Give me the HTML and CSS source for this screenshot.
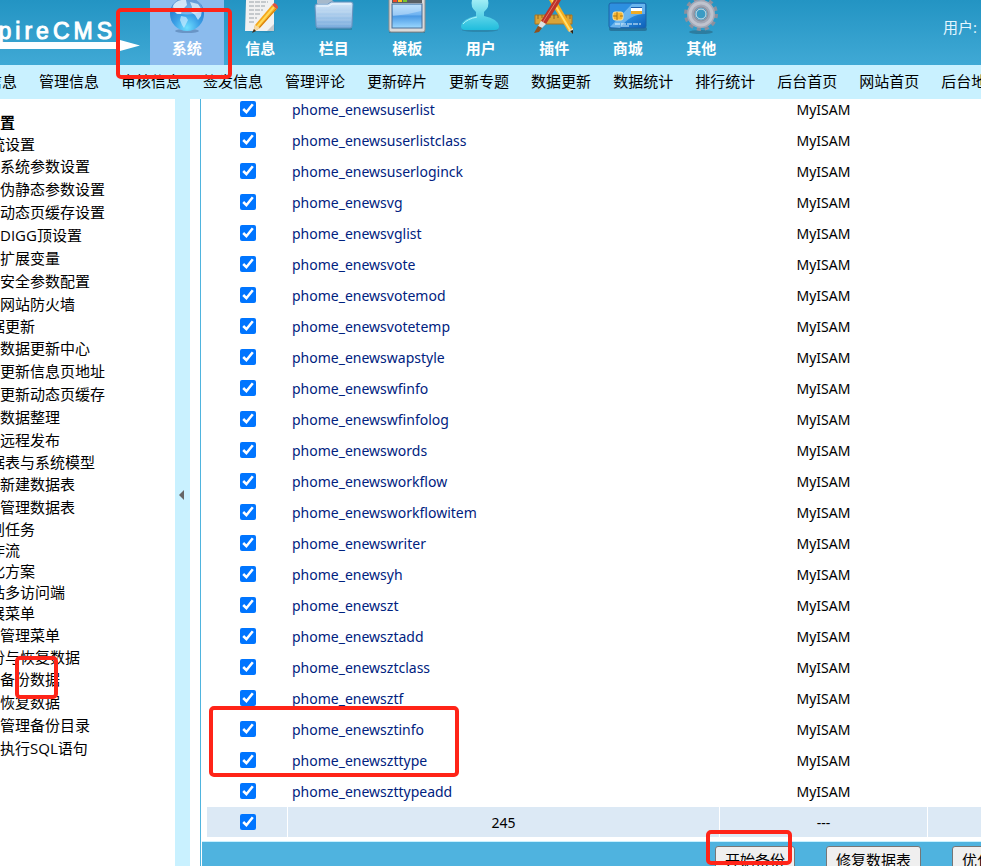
FILE: index.html
```
<!DOCTYPE html>
<html lang="zh-CN">
<head>
<meta charset="utf-8">
<title>EmpireCMS</title>
<link rel="stylesheet" href="styles.css">
</head>
<body>
<header class="top">
  <div class="logo">
    <span class="logo-text">EmpireCMS</span>
    <svg class="logo-arrow" width="140" height="12" viewBox="0 0 140 12" aria-hidden="true"><path d="M0 2H120V0L140 5.500L120 11V9H0Z" fill="#fff"/></svg>
  </div>
  <nav class="tabs">
    <a class="tab active" href="#">
      <svg width="40" height="36" viewBox="0 0 40 36" aria-hidden="true">
        <defs><radialGradient id="globe" cx=".5" cy=".9" r=".95"><stop offset="0" stop-color="#6fe0ff"/><stop offset=".4" stop-color="#3a9fe6"/><stop offset="1" stop-color="#1c62bd"/></radialGradient></defs>
        <ellipse cx="20" cy="31" rx="12" ry="2" fill="#48709f" opacity=".5"/>
        <circle cx="20" cy="14" r="17" fill="url(#globe)"/>
        <path d="M6 6Q9-1 19 0L20 5L17 8L15 10L14 14L10 14L7 11Z" fill="#e8f5ff" opacity=".8"/>
        <path d="M14 16L19 17L21 20L19 24L17 28L15 25L13 20Z" fill="#c7ebff" opacity=".7"/>
        <path d="M23 2L31 4L35 10L34 16L31 20L28 15L24 12L25 7Z" fill="#dff2ff" opacity=".75"/>
        <path d="M4 11Q20 18 36 11Q34-3 20-3Q6-3 4 11" fill="#fff" opacity=".3"/>
      </svg>
      <span>系统</span>
    </a>
    <a class="tab" href="#">
      <svg width="40" height="36" viewBox="0 0 40 36" aria-hidden="true">
        <path d="M5 0H32L35 31L28 33L5 31Z" fill="#25799e" opacity=".35"/>
        <path d="M6 0H34V31H5Z" fill="#f1f1f1"/><path d="M27 31L34 24V31Z" fill="#c4c8cc"/>
        <path d="M9 2H28M9 6H25M9 10H23M9 14H20M9 18H17M9 22H15" stroke="#b7bcc0" stroke-width="1.500" stroke-dasharray="5 1"/>
        <path d="M13 32L15 25L32 5L37 9L20 28Z" fill="#f5a81c"/>
        <path d="M17 27L34 7" stroke="#ffd95b" stroke-width="2"/><path d="M19 28L36 9" stroke="#cd7410" stroke-width="1"/>
        <path d="M32 5L34 3Q38 4 38 8L37 9Z" fill="#e0523e"/>
        <path d="M13 32L15 25L20 28Z" fill="#f4d9a5"/><path d="M12 33L14 29L16 31Z" fill="#412a17"/>
      </svg>
      <span>信息</span>
    </a>
    <a class="tab" href="#">
      <svg width="40" height="36" viewBox="0 0 40 36" aria-hidden="true">
        <defs><linearGradient id="folder" x2="0" y2="1"><stop stop-color="#d6e8f8"/><stop offset="1" stop-color="#78abdd"/></linearGradient></defs>
        <path d="M2 28H38V30H2Z" fill="#27637f" opacity=".4"/>
        <path d="M3 0H18L20 2H37V10H3Z" fill="#a6b9cb"/><path d="M4 3H36V10H4Z" fill="#d8dfe7"/>
        <path d="M1 6Q1 4 3 4H14L17 2H37Q39 2 39 4L38 26Q38 28 36 28H4Q2 28 2 26Z" fill="url(#folder)" stroke="#6792bd"/>
        <path d="M3 6H15L18 4H37" fill="none" stroke="#f0f8ff"/>
        <path d="M3 12H37M3 16H37M3 20H37M3 24H37" stroke="#fff" opacity=".18"/>
      </svg>
      <span>栏目</span>
    </a>
    <a class="tab" href="#">
      <svg width="40" height="36" viewBox="0 0 40 36" aria-hidden="true">
        <defs><linearGradient id="pane" x2="0" y2="1"><stop stop-color="#a4d5fc"/><stop offset=".45" stop-color="#6fb2f0"/><stop offset=".5" stop-color="#4a99e4"/><stop offset="1" stop-color="#9bd8ff"/></linearGradient></defs>
        <path d="M2 31H38V33H2Z" fill="#24566f" opacity=".4"/>
        <rect x="2" y="-4" width="36" height="36" rx="2" fill="#dadada" stroke="#8c8c8c"/>
        <rect x="5" y="-4" width="30" height="7" fill="#585f65"/>
        <rect x="6" y="-2" width="4" height="4" fill="#ef4a2b"/><rect x="11" y="-2" width="4" height="4" fill="#ffc423"/><rect x="16" y="-2" width="4" height="4" fill="#79c52c"/>
        <rect x="5" y="4" width="30" height="24" fill="url(#pane)" stroke="#4a6f96"/>
        <path d="M6 16Q20 15 34 11V5H6Z" fill="#fff" opacity=".3"/>
      </svg>
      <span>模板</span>
    </a>
    <a class="tab" href="#">
      <svg width="40" height="36" viewBox="0 0 40 36" aria-hidden="true">
        <defs><linearGradient id="person" x2="0" y2="1"><stop stop-color="#a0edf5"/><stop offset="1" stop-color="#20bddd"/></linearGradient></defs>
        <ellipse cx="19" cy="30" rx="18" ry="2" fill="#246783" opacity=".4"/>
        <path d="M11 0H27Q29 7 23 12V16Q37 19 38 26Q38 30 34 30H4Q0 30 0 26Q1 19 15 16V12Q9 7 11 0Z" fill="url(#person)"/>
        <path d="M2 24Q6 19 16 17" fill="none" stroke="#a9f2fa"/>
      </svg>
      <span>用户</span>
    </a>
    <a class="tab" href="#">
      <svg width="40" height="36" viewBox="0 0 40 36" aria-hidden="true">
        <path d="M1 15H38V24H1Z" fill="#d9a439" stroke="#a87422"/><path d="M4 15V19M8 15V18M12 15V19M16 15V18M20 15V19M24 15V18M28 15V19M32 15V18M36 15V19" stroke="#8f651c"/>
        <path d="M15 0H22L39 29L38 33L34 31Z" fill="#f4ad1e"/><path d="M18 0L36 30" stroke="#ffe071" stroke-width="2"/><path d="M34 31L39 28L39 33Z" fill="#f5deb5"/><path d="M36 31L39 30V34Z" fill="#29211b"/>
        <path d="M20 0H27L12 24L7 21Z" fill="#bd3328"/><path d="M23 0L9 22" stroke="#e07868" stroke-width="1"/>
        <path d="M7 21L12 24L8 28L4 26Z" fill="#dce0e2"/><path d="M4 26L8 28L5 32L0 33Z" fill="#91501d"/>
      </svg>
      <span>插件</span>
    </a>
    <a class="tab" href="#">
      <svg width="40" height="36" viewBox="0 0 40 36" aria-hidden="true">
        <defs><linearGradient id="card" x2="1" y2="1"><stop stop-color="#2f8fe0"/><stop offset=".5" stop-color="#2b8fe0"/><stop offset="1" stop-color="#0d5fb8"/></linearGradient></defs>
        <rect x="1" y="27" width="38" height="4" rx="2" fill="#183c5c" opacity=".4"/>
        <rect x="1" y="3" width="37" height="25" rx="2" fill="url(#card)" stroke="#1d64a6"/>
        <path d="M2 27L24 4H37V14Q22 14 12 28Z" fill="#b9e4ff" opacity=".45"/>
        <rect x="5" y="12" width="10" height="8" rx="2" fill="#f5b632" stroke="#ffe5a0"/><path d="M9 12V20M5 16H9M12 16H15" stroke="#a77214"/>
        <path d="M23 7H34V10H23Z" fill="#fff"/><path d="M23 7H34V8H23Z" fill="#1d5faf"/><path d="M23 10H34V14H23Z" fill="#efac25"/><path d="M23 10H34V11H23Z" fill="#fff"/>
        <path d="M7 24H33" stroke="#eaf8ff" stroke-width="1" stroke-dasharray="5 1"/><path d="M13 26H21" stroke="#d7f2ff"/>
      </svg>
      <span>商城</span>
    </a>
    <a class="tab" href="#">
      <svg width="40" height="36" viewBox="0 0 40 36" aria-hidden="true">
        <ellipse cx="20" cy="32" rx="12" ry="2" fill="#285b73" opacity=".5"/>
        <circle cx="20" cy="14" r="15" fill="none" stroke="#8b909e" stroke-width="4" stroke-dasharray="4 3.854"/>
        <circle cx="20" cy="14" r="10" fill="none" stroke="#a3a8b6" stroke-width="8"/>
        <circle cx="20" cy="14" r="11" fill="none" stroke="#bfc3ce" stroke-width="3"/>
        <circle cx="20" cy="14" r="7" fill="none" stroke="#858b99" stroke-width="1"/>
        <circle cx="20" cy="14" r="5" fill="#3b9bc4" stroke="#dcdee4"/>
      </svg>
      <span>其他</span>
    </a>
  </nav>
  <div class="user">用户:</div>
</header>

<nav class="subnav">
  <a href="#">增加信息</a><a href="#">管理信息</a><a href="#">审核信息</a><a href="#">签发信息</a><a href="#">管理评论</a><a href="#">更新碎片</a><a href="#">更新专题</a><a href="#">数据更新</a><a href="#">数据统计</a><a href="#">排行统计</a><a href="#">后台首页</a><a href="#">网站首页</a><a href="#">后台地图</a>
</nav>

<div class="body">
  <aside class="side">
    <h2>系统设置</h2>
    <ul class="tree">
      <li class="group">系统设置</li>
      <li>系统参数设置</li>
      <li>伪静态参数设置</li>
      <li>动态页缓存设置</li>
      <li>DIGG顶设置</li>
      <li>扩展变量</li>
      <li>安全参数配置</li>
      <li>网站防火墙</li>
      <li class="group">数据更新</li>
      <li>数据更新中心</li>
      <li>更新信息页地址</li>
      <li>更新动态页缓存</li>
      <li>数据整理</li>
      <li>远程发布</li>
      <li class="group">数据表与系统模型</li>
      <li>新建数据表</li>
      <li>管理数据表</li>
      <li class="group">计划任务</li>
      <li class="group">工作流</li>
      <li class="group">优化方案</li>
      <li class="group">网站多访问端</li>
      <li class="group">扩展菜单</li>
      <li>管理菜单</li>
      <li class="group">备份与恢复数据</li>
      <li>备份数据</li>
      <li>恢复数据</li>
      <li>管理备份目录</li>
      <li>执行SQL语句</li>
    </ul>
  </aside>
  <button class="divider" type="button" aria-label="收起菜单"><svg width="6" height="10" viewBox="0 0 6 10" aria-hidden="true"><path d="M5 0V10L0 5Z" fill="#666"/></svg></button>
  <main class="main">
    <table class="list">
      <colgroup><col class="c-check"><col class="c-name"><col class="c-type"><col></colgroup>
      <tbody id="rows"></tbody>
      <tfoot>
        <tr><td><input type="checkbox" checked aria-label="全选"></td><td>245</td><td>---</td><td></td></tr>
      </tfoot>
    </table>
    <div class="actions">
      <button type="button">开始备份</button>
      <button type="button">修复数据表</button>
      <button type="button">优化数据表</button>
    </div>
  </main>
</div>

<div class="mark mark-tab"></div>
<div class="mark mark-menu"></div>
<div class="mark mark-rows"></div>
<div class="mark mark-start"></div>
<script src="rows.js"></script>
</body>
</html>
```
FILE: styles.css
```
* { box-sizing: border-box; }
body {
  margin: 0;
  height: 100vh;
  display: flex;
  flex-direction: column;
  overflow: hidden;
  position: relative;
  background: #fff;
  color: #000;
  font: 15px/20px "Open Sans", "Noto Sans CJK SC", sans-serif;
}
a { color: inherit; text-decoration: none; white-space: nowrap; }

.top {
  flex: none;
  height: 65px;
  display: flex;
  overflow: hidden;
  background: linear-gradient(#2394c3, #40a9d5);
  color: #fff;
}
.logo { flex: none; width: 150px; padding-top: 18px; }
.logo-text {
  display: flex;
  justify-content: flex-end;
  width: 116px;
  height: 22px;
  font: 23px/26px "Liberation Sans", sans-serif;
  letter-spacing: 4px;
  -webkit-text-stroke: 1px #fff;
}
.logo-arrow { display: block; }
.tabs { flex: none; width: 588px; display: grid; grid-template-columns: repeat(8, 1fr); }
.tab { display: flex; flex-direction: column; align-items: center; font-weight: 700; }
.tab svg { display: block; margin-bottom: 2px; }
.tab.active { background: #8bbbed; }
.user { margin-left: auto; width: 38px; padding-top: 17px; color: #e4f6ff; white-space: nowrap; }

.subnav {
  flex: none;
  height: 34px;
  display: flex;
  align-items: center;
  gap: 22px;
  padding-bottom: 2px;
  overflow: hidden;
  background: #c9f1ff;
}
.subnav a { flex: none; }
.subnav a:first-child { margin-left: -43px; }

.body { flex: 1; min-height: 0; display: flex; }
.side { flex: none; width: 175px; overflow: hidden; padding-top: 12px; }
.side h2 { margin: 0 0 0 -45px; font-size: 15px; line-height: 22px; }
.tree { list-style: none; margin: 1px 0 0 -25px; padding: 0; white-space: nowrap; }
.tree li { padding-left: 25px; line-height: 23px; height: 23px; }
.tree .group { padding-left: 0; line-height: 21px; height: 21px; }
.divider {
  flex: none;
  width: 15px;
  margin: 0 10px 0 0;
  padding: 26px 0 0 4px;
  border: 0;
  background: #c9f1ff;
  text-align: left;
}
.main { flex: 1; min-width: 0; overflow: hidden; border-left: 1px solid #4fb4de; }
.list {
  width: calc(100% - 4px);
  margin: -6px 0 0 5px;
  table-layout: fixed;
  border-collapse: separate;
  border-spacing: 1px;
  font: 14px/20px "Noto Sans", sans-serif;
}
.c-check { width: 80px; }
.c-name { width: 431px; }
.c-type { width: 207px; }
.list td { height: 30px; padding: 2px 0 0; text-align: center; }
.list td:first-child { padding: 0 0 0 2px; }
.list tbody td:nth-child(2) { padding-left: 4px; text-align: left; color: #002280; }
.list tfoot td { background: #dce9f5; }
.list input { display: block; width: 16px; height: 16px; margin: 0 auto; accent-color: #0075ff; }
.actions {
  display: flex;
  gap: 31px;
  margin: 3px 0 0 1px;
  padding: 4px 0 4px 513px;
  border-top: 1px solid #c9f1ff;
  background: #4fb3df;
}
.actions button {
  flex: none;
  height: 28px;
  padding: 0 9px;
  border: 1px solid #767676;
  border-radius: 3px;
  background: #efefef;
  color: #000;
  font: inherit;
}

.mark { position: absolute; border: 4px solid #ff2418; border-radius: 5px; pointer-events: none; }
.mark-tab { left: 116px; top: 8px; width: 116px; height: 71px; }
.mark-menu { left: 15px; top: 656px; width: 43px; height: 43px; }
.mark-rows { left: 209px; top: 706px; width: 250px; height: 71px; }
.mark-start { left: 706px; top: 830px; width: 86px; height: 35px; }
```
FILE: rows.js
```
const names = ["userlist", "userlistclass", "userloginck", "vg", "vglist", "vote", "votemod", "votetemp",
  "wapstyle", "wfinfo", "wfinfolog", "words", "workflow", "workflowitem", "writer", "yh", "zt", "ztadd",
  "ztclass", "ztf", "ztinfo", "zttype", "zttypeadd"];
document.getElementById("rows").innerHTML = names.map(n => {
  const table = "phome_enews" + n;
  return `<tr><td><input type="checkbox" checked aria-label="${table}"></td><td>${table}</td><td>MyISAM</td><td></td></tr>`;
}).join("");
```
